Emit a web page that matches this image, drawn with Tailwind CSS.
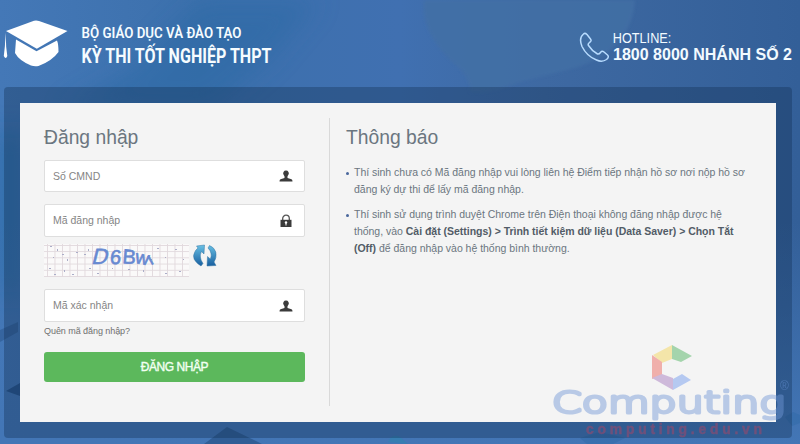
<!DOCTYPE html>
<html lang="vi">
<head>
<meta charset="utf-8">
<title>Kỳ thi tốt nghiệp THPT</title>
<script src="https://cdn.jsdelivr.net/npm/@tailwindcss/browser@4"></script>
</head>
<body class="relative w-[800px] h-[444px] overflow-hidden bg-[#3c6fae] font-['Liberation_Sans',sans-serif] text-[#6b7680]">
<!-- backdrop -->
<svg class="absolute inset-0" width="800" height="444" aria-hidden="true">
  <defs>
    <linearGradient id="bg" x1="0" x2="1"><stop offset="0" stop-color="#4478b7"/><stop offset=".25" stop-color="#3c70ac"/><stop offset=".5" stop-color="#4070b1"/><stop offset=".68" stop-color="#3e69a2"/><stop offset="1" stop-color="#335f98"/></linearGradient>
    <linearGradient id="low" x1="0" y1="0" x2="0" y2="1"><stop offset=".5" stop-color="#4376b6" stop-opacity="0"/><stop offset="1" stop-color="#4376b6"/></linearGradient>
    <filter id="soft" x="-30%" y="-30%" width="160%" height="160%"><feGaussianBlur stdDeviation="12"/></filter>
    <filter id="edge"><feGaussianBlur stdDeviation="1.5"/></filter>
  </defs>
  <rect width="800" height="444" fill="url(#bg)"/>
  <path d="M200 0H320L270 60L210 110H60L130 70Z" fill="#2c69a4" opacity=".5" filter="url(#soft)"/>
  <path d="M424 0H635Q632 50 575 68L520 82Q490 95 470 92Q470 75 450 60Q420 30 424 0Z" fill="#436fa5" opacity=".8" filter="url(#edge)"/>
  <path d="M0 130H20V300H0Z" fill="#2468a2" opacity=".7" filter="url(#soft)"/>
  <rect width="800" height="444" fill="url(#low)"/>
  <path d="M6 391L20 383V396Z" fill="#27548c"/>
  <path d="M204 444L227 427L262 444Z" fill="#315e96"/>
  <path d="M0 330L18 322V332L0 342Z" fill="#315e96" opacity=".7"/>
  <path d="M388 442Q392 433 400 437L408 444Z" fill="#377eb2"/>
  <path d="M580 438l20-6 25 6-12 6h-26zM785 417l8-5 7 3v8l-8 3z" fill="#2f69a8" opacity=".5"/>
</svg>

<header class="relative h-[87px] flex items-start justify-between pl-[3px] pr-[7px]">
  <div class="flex">
    <svg class="mt-[20px]" width="66" height="48" viewBox="3 20 66 48" fill="#fff"><path d="M34 20.8Q36.500 20.300 39 21L67.500 31L36.800 48.800L6 31Z"/><path d="M16 39.500L36.500 51.300L57 40.500Q58.500 44 58.500 52Q52 61 38.500 66Q34.500 66.800 31 65.500Q19 60.500 15 53Z"/><path d="M5.600 32.500L6.200 47L7.300 56Q5.800 60 3.800 56L4.900 46Z"/></svg>
    <svg class="mt-[10px] ml-[10px] overflow-visible" width="220" height="70" viewBox="79 10 220 70" font-family="Roboto, sans-serif" fill="#f6fcff"><text x="81.500" y="37.700" font-size="14.500" font-weight="600" textLength="160" lengthAdjust="spacingAndGlyphs">BỘ GIÁO DỤC VÀ ĐÀO TẠO</text><text x="81.500" y="62.500" font-size="19.500" font-weight="700" textLength="190" lengthAdjust="spacingAndGlyphs">KỲ THI TỐT NGHIỆP THPT</text></svg>
  </div>
  <div class="flex mt-[28px]">
    <svg width="33" height="36" viewBox="579 28 33 36" fill="none" stroke="#b8dcff" stroke-width="1.500" stroke-linejoin="round"><path d="M583.500 34Q585 32.500 587 34.500L590.500 39Q592 41 589.500 42.500Q587.500 44 588.500 45.500Q592 51 597.500 54Q599 54.500 600.500 52.500Q602 50.500 604 52L607.500 55Q609.500 57 606.500 59.500Q602 62.500 596.500 60Q587 56.500 582 46.500Q578.500 38 583.500 34Z"/></svg>
    <svg width="181" height="36" viewBox="612 28 181 36" font-family="Liberation Sans, sans-serif" fill="#f2faff"><text x="612.800" y="42.500" font-size="14" textLength="58.500" lengthAdjust="spacingAndGlyphs">HOTLINE:</text><text x="613" y="60" font-size="16" font-weight="700" textLength="179" lengthAdjust="spacingAndGlyphs">1800 8000 NHÁNH SỐ 2</text></svg>
  </div>
</header>

<div class="relative ml-1 w-[788px] h-[351px] rounded-[4px] bg-[#102d50]/35 p-4">
  <main class="flex h-[319px] w-[756px] bg-[#f4f4f4] pt-[15px] pb-4 pl-6">
    <form class="w-[286px] border-r border-[#d9d9d9] pr-6">
      <h1 class="mt-[8px] h-[33px] text-[19.3px] leading-6">Đăng nhập</h1>
      <div class="flex h-8 items-center justify-between rounded-[2px] border border-[#dedede] bg-white pl-2 pr-[11px] mt-px"><span class="pt-px text-[10.5px] text-[#858585]">Số CMND</span><svg width="14" height="14" viewBox="0 0 14 14" fill="#3b3b3b"><path d="M7 1.500a2.800 2.800 0 0 1 2.400 4.300L8.500 7.300V9l4 1.200q1 .5 1 2.300H.5q0-1.800 1-2.300l4-1.200V7.300L4.600 5.800A2.800 2.800 0 0 1 7 1.500Z"/></svg></div>
      <div class="mt-3 flex h-[33px] items-center justify-between rounded-[2px] border border-[#dedede] bg-white pl-2 pr-[11px]"><span class="pt-px text-[10.5px] text-[#858585]">Mã đăng nhập</span><svg width="14" height="14" viewBox="0 0 14 14"><path d="M3.700 7V4.500a3.300 3.300 0 0 1 6.600 0V7" fill="none" stroke="#555" stroke-width="1.300"/><path d="M1.500 5.800h11V13h-11Z" fill="#3b3b3b"/><circle cx="7" cy="8.500" r="1.200" fill="#fff"/><path d="M6.500 9h1v2.500h-1Z" fill="#fff"/></svg></div>
      <div class="mt-[7px] flex h-8 items-start">
        <svg width="145" height="33" viewBox="44 244 145 33">
          <defs><pattern id="grid" x="47" y="245" width="7.500" height="6.200" patternUnits="userSpaceOnUse"><path d="M.5 0V6.200M0 .5H7.500" stroke="#e1d9dd" stroke-width=".9" fill="none"/></pattern></defs>
          <rect x="44" y="244" width="145" height="33" fill="#faf9f9"/><rect x="44" y="244" width="145" height="33" fill="url(#grid)"/>
          <g fill="#aaadc8"><path d="M50 246h2v1h-2zM57 249h1v2h-1zM53 257h1v1h-1zM62 254h2v1h-2zM67 259h1v2h-1zM76 252h2v1h-2zM84 254h2v1h-2zM49 268h2v1h-2zM54 274h2v1h-2zM64 270h1v2h-1zM72 274h2v1h-2zM89 268h2v1h-2zM97 273h2v1h-2zM88 249h1v2h-1zM112 268h1v1h-1zM128 269h2v1h-2zM143 270h1v2h-1zM157 248h2v1h-2zM165 257h1v1h-1zM175 249h2v1h-2zM183 259h1v1h-1zM179 271h2v1h-2zM165 273h2v1h-2zM150 259h2v1h-2z"/></g>
          <g font-family="Liberation Sans, sans-serif" fill="#6789d1" stroke="#6789d1" stroke-width=".6"><text transform="translate(91 264) skewX(-14)" font-size="22">D</text><text transform="translate(109.500 264) skewX(-5)" font-size="20">6</text><text transform="translate(122 263) rotate(5)" font-size="20">B</text><text transform="translate(134.500 263) rotate(10)" font-size="19">w</text><text transform="translate(150.500 265.500) rotate(-28)" font-size="18">ı</text></g>
        </svg>
        <svg class="ml-1" width="24" height="24" viewBox="192 250 24 24"><defs><linearGradient id="arrow" x1="0" y1="250" x2="0" y2="273" gradientUnits="userSpaceOnUse"><stop stop-color="#6cc5e8"/><stop offset="1" stop-color="#145a9c"/></linearGradient></defs><g fill="url(#arrow)" stroke="#3777a4" stroke-width=".5"><path d="M195.500 252L203.500 251L203 260L200.500 257.500Q197.500 263 202 269.500L200 272Q189.500 265.500 193.800 258Q194.500 256 197 254Z"/><path d="M208.500 251.500Q213 253 214.800 258Q216 263.500 213 268L215 271.500L206 272L206.500 262.500L209.300 265Q212 259 207 254Z"/></g></svg>
      </div>
      <div class="mt-[13px] flex h-[33px] items-center justify-between rounded-[2px] border border-[#dedede] bg-white pl-2 pr-[11px]"><span class="pt-px text-[10.5px] text-[#858585]">Mã xác nhận</span><svg width="14" height="14" viewBox="0 0 14 14" fill="#3b3b3b"><path d="M7 1.500a2.800 2.800 0 0 1 2.400 4.300L8.500 7.300V9l4 1.200q1 .5 1 2.300H.5q0-1.800 1-2.300l4-1.200V7.300L4.600 5.800A2.800 2.800 0 0 1 7 1.500Z"/></svg></div>
      <p class="mt-[3px] h-[13px] text-[9px] leading-[12px] tracking-[-0.06px] text-[#707070]">Quên mã đăng nhập?</p>
      <button type="button" class="mt-[14px] flex h-[30px] w-full items-center justify-center rounded-[3px] bg-[#5cb85c] pb-px text-[12px] tracking-[-0.45px] text-[#f1fff1] [-webkit-text-stroke:0.4px_#f1fff1]">ĐĂNG NHẬP</button>
    </form>
    <section class="w-[430px] pl-4">
      <h2 class="mt-[8px] h-[38px] text-[19.3px] leading-6">Thông báo</h2>
      <ul class="text-[10.5px] leading-[17px] tracking-[-0.02px] whitespace-nowrap">
        <li class="flex"><span class="mt-[8px] mr-[5px] size-[3px] rounded-full bg-[#4a679c]"></span><p>Thí sinh chưa có Mã đăng nhập vui lòng liên hệ Điểm tiếp nhận hồ sơ nơi nộp hồ sơ<br>đăng ký dự thi để lấy mã đăng nhập.</p></li>
        <li class="mt-2 flex"><span class="mt-[8px] mr-[5px] size-[3px] rounded-full bg-[#4a679c]"></span><p>Thí sinh sử dụng trình duyệt Chrome trên Điện thoại không đăng nhập được hệ<br>thống, vào <b class="text-[#525c67]">Cài đặt (Settings) &gt; Trình tiết kiệm dữ liệu (Data Saver) &gt; Chọn Tắt<br>(Off)</b> để đăng nhập vào hệ thống bình thường.</p></li>
      </ul>
    </section>
  </main>
</div>

<!-- watermark -->
<svg class="absolute left-0 top-0 pointer-events-none" width="800" height="444">
  <g opacity=".55"><path d="M653 355L672 345V359L662 363Z" fill="#f5d96d"/><path d="M672 345L692 356L681 362L672 359Z" fill="#63bb72"/><path d="M652 355L662 362V375L652 379Z" fill="#ed7771"/><path d="M652 378L662 374L673 378V390Z" fill="#b08ac6"/><path d="M673 390V379L682 374L691 380Z" fill="#82a6f0"/></g>
  <text x="552" y="412.500" font-family="DejaVu Sans, sans-serif" font-size="30" font-weight="200" textLength="233" lengthAdjust="spacingAndGlyphs" fill="#7197d6" stroke="#7197d6" stroke-width="3" stroke-linejoin="round" opacity=".45">Computing</text>
  <text x="586" y="434" font-family="Liberation Sans, sans-serif" font-size="14" font-weight="700" textLength="176" lengthAdjust="spacing" fill="#a34768" stroke="#a34768" stroke-width=".4" opacity=".55">computing.edu.vn</text>
  <text x="780" y="390" font-family="Liberation Sans, sans-serif" font-size="12" fill="#6e98dc" opacity=".45">®</text>
</svg>
</body>
</html>
